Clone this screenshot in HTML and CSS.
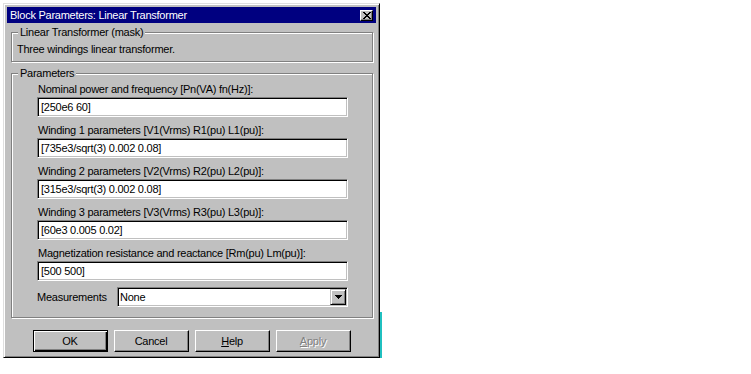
FILE: index.html
```html
<!DOCTYPE html>
<html lang="en">
<head>
  <meta charset="UTF-8">
  <title>Block Parameters: Linear Transformer</title>
  <link rel="stylesheet" href="styles.css">
</head>
<body>

  <div class="window">
    <div class="titlebar">
      <span class="title">Block Parameters: Linear Transformer</span>
      <span class="close-btn">
        <svg width="8" height="7" viewBox="0 0 8 7" shape-rendering="crispEdges">
          <path d="M0 0h2v1H0z M6 0h2v1H6z M1 1h2v1H1z M5 1h2v1H5z M2 2h4v1H2z M3 3h2v1H3z M2 4h4v1H2z M1 5h2v1H1z M5 5h2v1H5z M0 6h2v1H0z M6 6h2v1H6z"/>
        </svg>
      </span>
    </div>

    <div class="group mask">
      <span class="legend">Linear Transformer (mask)</span>
      <div class="desc">Three windings linear transformer.</div>
    </div>

    <div class="group params">
      <span class="legend">Parameters</span>

      <div class="row">
        <div class="label">Nominal power and frequency [Pn(VA) fn(Hz)]:</div>
        <div class="field">[250e6 60]</div>
      </div>
      <div class="row">
        <div class="label">Winding 1 parameters [V1(Vrms) R1(pu) L1(pu)]:</div>
        <div class="field">[735e3/sqrt(3) 0.002 0.08]</div>
      </div>
      <div class="row">
        <div class="label">Winding 2 parameters [V2(Vrms) R2(pu) L2(pu)]:</div>
        <div class="field">[315e3/sqrt(3) 0.002 0.08]</div>
      </div>
      <div class="row">
        <div class="label">Winding 3 parameters [V3(Vrms) R3(pu) L3(pu)]:</div>
        <div class="field">[60e3 0.005 0.02]</div>
      </div>
      <div class="row">
        <div class="label">Magnetization resistance and reactance [Rm(pu) Lm(pu)]:</div>
        <div class="field">[500 500]</div>
      </div>

      <div class="select-row">
        <span class="select-label">Measurements</span>
        <div class="field select">
          <span class="select-value">None</span>
          <span class="arrow-btn">
            <svg width="7" height="4" viewBox="0 0 7 4" shape-rendering="crispEdges">
              <path d="M0 0h7v1H0z M1 1h5v1H1z M2 2h3v1H2z M3 3h1v1H3z"/>
            </svg>
          </span>
        </div>
      </div>
    </div>

    <div class="buttons">
      <div class="btn default">OK</div>
      <div class="btn">Cancel</div>
      <div class="btn"><u>H</u>elp</div>
      <div class="btn disabled"><u>A</u>pply</div>
    </div>
  </div>

</body>
</html>
```

FILE: styles.css
```css
body {
  margin: 0;
  background: #fff;
  font-family: "Liberation Sans", Arial, sans-serif;
  font-size: 11px;
  letter-spacing: -0.25px;
  color: #000;
}
.window {
  position: relative;
  box-sizing: border-box;
  width: 377px;
  height: 355px;
  margin: 3px 0 0 3px;
  padding: 3px;
  background: #c0c0c0;
  border: 1px solid;
  border-color: #dfdfdf #000 #000 #dfdfdf;
  box-shadow: inset 1px 1px #fff, inset -1px -1px #808080, 0 1px #20c0c0;
  display: flex;
  flex-direction: column;
}
.window::after {
  content: "";
  position: absolute;
  right: -3px;
  top: 308px;
  bottom: -2px;
  width: 2px;
  background: #20c0c0;
}
.titlebar {
  height: 16px;
  padding: 0 3px;
  background: #000080;
  color: #fff;
  display: flex;
  align-items: center;
  justify-content: space-between;
  line-height: 16px;
}
.close-btn {
  box-sizing: border-box;
  width: 13px;
  height: 11px;
  background: #c0c0c0;
  border: 1px solid;
  border-color: #fff #000 #000 #fff;
  box-shadow: inset -1px -1px #808080;
  display: flex;
  align-items: center;
  justify-content: center;
}
.group {
  position: relative;
  margin: 0 3px 0 4px;
  border: 1px solid #808080;
  box-shadow: inset 1px 1px #fff, 1px 1px #fff;
}
.legend {
  position: absolute;
  top: -8px;
  left: 6px;
  padding: 0 2px;
  background: #c0c0c0;
  line-height: 14px;
}
.mask {
  margin-top: 9px;
  padding: 9px 5px 5px;
  line-height: 14px;
}
.params {
  margin-top: 11px;
  padding: 8px 24px 10px 25px;
}
.row + .row { margin-top: 6px; }
.label {
  line-height: 14px;
  margin-bottom: 1px;
  padding-left: 1px;
}
.field {
  box-sizing: border-box;
  height: 20px;
  padding: 0 3px;
  background: #fff;
  border: 1px solid;
  border-color: #808080 #fff #fff #808080;
  box-shadow: inset 1px 1px #000, inset -1px -1px #c0c0c0;
  line-height: 18px;
  white-space: nowrap;
}
.select-row {
  margin-top: 6px;
  display: flex;
  align-items: center;
}
.select-label { width: 80px; }
.select {
  flex: 1;
  padding: 0;
  display: flex;
  align-items: center;
}
.select-value {
  flex: 1;
  padding-left: 2px;
}
.arrow-btn {
  box-sizing: border-box;
  width: 16px;
  height: 16px;
  margin-right: 1px;
  background: #c0c0c0;
  border: 1px solid;
  border-color: #c0c0c0 #000 #000 #c0c0c0;
  box-shadow: inset 1px 1px #fff, inset -1px -1px #808080;
  display: flex;
  align-items: center;
  justify-content: center;
}
.buttons {
  margin-top: 12px;
  display: flex;
  justify-content: center;
  gap: 6px;
}
.btn {
  box-sizing: border-box;
  width: 75px;
  height: 22px;
  border: 1px solid;
  border-color: #fff #000 #000 #fff;
  box-shadow: inset -1px -1px #808080;
  text-align: center;
  line-height: 20px;
}
.btn.default {
  border-color: #000;
  box-shadow: inset 1px 1px #fff, inset -1px -1px #000, inset -2px -2px #808080;
}
.btn.disabled {
  color: #808080;
  text-shadow: 1px 1px #fff;
}
```
